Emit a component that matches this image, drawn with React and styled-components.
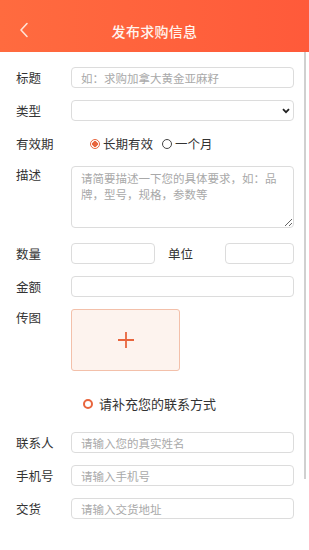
import React, { useState } from 'react';
import styled, { createGlobalStyle } from 'styled-components';

const GlobalStyle = createGlobalStyle`
    html, body {
        margin: 0;
        padding: 0;
        background: #fff;
        font-family: "Noto Sans CJK SC", "Liberation Sans", sans-serif;
    }
    * { box-sizing: border-box; }
`

export default function App() {
    const [period, setPeriod] = useState('long')

    return (
        <Page>
            <GlobalStyle />
            <Header>
                <BackButton>
                    <svg width="10" height="16" viewBox="0 0 10 16">
                        <path d="M8 1.5 L2 8 L8 14.5" fill="none" stroke="#ffe3d6" strokeWidth="1.6" strokeLinecap="round" strokeLinejoin="round" />
                    </svg>
                </BackButton>
                <Title>发布求购信息</Title>
            </Header>

            <Form>
                <Row>
                    <Label>标题</Label>
                    <Input placeholder="如：求购加拿大黄金亚麻籽" />
                </Row>
                <Row>
                    <Label>类型</Label>
                    <SelectWrap>
                        <Select defaultValue="">
                            <option value=""></option>
                        </Select>
                        <Chevron width="8" height="6" viewBox="0 0 8 6">
                            <path d="M1 1.2 L4 4.2 L7 1.2" fill="none" stroke="#222" strokeWidth="1.8" />
                        </Chevron>
                    </SelectWrap>
                </Row>
                <Row>
                    <Label>有效期</Label>
                    <RadioGroup>
                        <RadioItem onClick={() => setPeriod('long')}>
                            <RadioDot checked={period === 'long'} />长期有效
                        </RadioItem>
                        <RadioItem onClick={() => setPeriod('month')}>
                            <RadioDot checked={period === 'month'} />一个月
                        </RadioItem>
                    </RadioGroup>
                </Row>
                <Row top>
                    <Label top>描述</Label>
                    <TextArea placeholder="请简要描述一下您的具体要求，如：品牌，型号，规格，参数等" />
                </Row>
                <Row>
                    <Label>数量</Label>
                    <Input small />
                    <Label unit>单位</Label>
                    <Input />
                </Row>
                <Row>
                    <Label>金额</Label>
                    <Input />
                </Row>
                <Row top>
                    <Label top>传图</Label>
                    <UploadBox>
                        <svg width="18" height="18" viewBox="0 0 18 18">
                            <path d="M9 1 V17 M1 9 H17" stroke="#e8653d" strokeWidth="1.8" />
                        </svg>
                    </UploadBox>
                </Row>

                <SectionTitle>
                    <RingIcon />请补充您的联系方式
                </SectionTitle>

                <Row>
                    <Label>联系人</Label>
                    <Input placeholder="请输入您的真实姓名" />
                </Row>
                <Row>
                    <Label>手机号</Label>
                    <Input placeholder="请输入手机号" />
                </Row>
                <Row>
                    <Label>交货</Label>
                    <Input placeholder="请输入交货地址" />
                </Row>
            </Form>
            <ScrollThumb />
        </Page>
    );
}

const Page = styled.div`
    position: relative;
    width: 309px;
    height: 550px;
    overflow: hidden;
    background: #fff;
`

const Header = styled.div`
    display: flex;
    align-items: center;
    justify-content: center;
    position: relative;
    height: 52px;
    padding-top: 10px;
    background: linear-gradient(90deg, #ff6b3f 0%, #ff5a3a 100%);
`

const BackButton = styled.div`
    position: absolute;
    left: 19px;
    top: 22px;
    display: flex;
`

const Title = styled.div`
    color: #fff4ee;
    font-size: 14px;
    font-weight: 500;
    letter-spacing: 0.3px;
`

const Form = styled.div`
    display: flex;
    flex-direction: column;
    gap: 12px;
    padding: 15px 15px 0 16px;
`

const Row = styled.div`
    display: flex;
    align-items: ${p => p.top ? 'flex-start' : 'center'};
    min-height: 21px;
`

const Label = styled.div`
    flex: 0 0 ${p => p.unit ? '70px' : '55px'};
    padding-left: ${p => p.unit ? '13px' : '0'};
    font-size: 12.5px;
    color: #333;
    line-height: 21px;
    margin-top: ${p => p.top ? '-2px' : '0'};
`

const fieldBase = `
    height: 21px;
    border: 1px solid #dcdcdc;
    border-radius: 4px;
    background: #fff;
    font-family: "Noto Sans CJK SC", "Liberation Sans", sans-serif;
    font-size: 11.5px;
    color: #333;
    padding: 0 9px;
    outline: none;
    &::placeholder { color: #a9a9a9; }
`

const Input = styled.input`
    ${fieldBase}
    flex: ${p => p.small ? '0 0 84px' : '1'};
    width: ${p => p.small ? '84px' : 'auto'};
    min-width: 0;
`

const SelectWrap = styled.div`
    position: relative;
    flex: 1;
    display: flex;
`

const Select = styled.select`
    ${fieldBase}
    flex: 1;
    appearance: none;
`

const Chevron = styled.svg`
    position: absolute;
    right: 4px;
    top: 8px;
`

const RadioGroup = styled.div`
    display: flex;
    align-items: center;
    gap: 9px;
    padding-left: 19px;
    font-size: 12.5px;
    color: #333;
`

const RadioItem = styled.label`
    display: flex;
    align-items: center;
    gap: 3px;
    cursor: pointer;
`

const RadioDot = styled.span`
    width: 10px;
    height: 10px;
    border-radius: 50%;
    border: 1px solid ${p => p.checked ? '#e8653d' : '#444'};
    background: ${p => p.checked ? 'radial-gradient(circle, #e8653d 0 2.6px, #fff 3px)' : '#fff'};
`

const TextArea = styled.textarea`
    ${fieldBase}
    flex: 1;
    height: 62px;
    margin-bottom: 3px;
    padding: 3px 9px;
    line-height: 16px;
    resize: vertical;
`

const UploadBox = styled.div`
    width: 109px;
    height: 62px;
    display: flex;
    align-items: center;
    justify-content: center;
    background: #fdf3ee;
    border: 1px solid #f3c0aa;
    border-radius: 3px;
`

const SectionTitle = styled.div`
    display: flex;
    align-items: center;
    gap: 6px;
    padding-left: 67px;
    margin: 10px 0 6px;
    font-size: 13px;
    color: #333;
    line-height: 21px;
`

const RingIcon = styled.span`
    width: 10px;
    height: 10px;
    border-radius: 50%;
    border: 2.3px solid #e8653d;
`

const ScrollThumb = styled.div`
    position: absolute;
    right: 3px;
    top: 52px;
    width: 2px;
    height: 427px;
    background: #d0d0d0;
`
